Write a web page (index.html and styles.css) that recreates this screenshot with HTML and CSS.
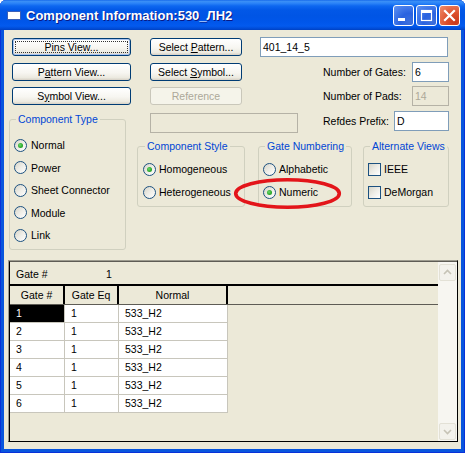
FILE: index.html
```html
<!DOCTYPE html>
<html>
<head>
<meta charset="utf-8">
<title>Component Information</title>
<link rel="stylesheet" href="styles.css">
</head>
<body>
<div class="window">
  <div class="titlebar">
    <svg class="app-icon" width="14" height="9" viewBox="0 0 14 9"><rect x="0.5" y="0.5" width="13" height="8" fill="#fff" stroke="#3a5fb8"/></svg>
    <span class="title">Component Information:530_ЛН2</span>
    <div class="caption">
      <span class="cbtn blue"><svg width="19" height="19" viewBox="0 0 19 19"><rect x="4" y="12" width="7" height="3" fill="#fff"/></svg></span>
      <span class="cbtn blue"><svg width="19" height="19" viewBox="0 0 19 19"><rect x="4.5" y="4.5" width="10" height="10" fill="none" stroke="#fff" stroke-width="1.2"/><rect x="4" y="4" width="11" height="3" fill="#fff"/></svg></span>
      <span class="cbtn red"><svg width="19" height="19" viewBox="0 0 19 19"><path d="M5 5 L14 14 M14 5 L5 14" stroke="#fff" stroke-width="2.2" stroke-linecap="square"/></svg></span>
    </div>
  </div>
  <div class="client">
    <div class="upper">
      <div class="left-col">
        <button class="btn btn-a default">Pins View...</button>
        <button class="btn btn-a">P<u>a</u>ttern View...</button>
        <button class="btn btn-a">S<u>y</u>mbol View...</button>
        <fieldset class="group g-type">
          <legend>Component Type</legend>
          <div class="opts opts-type">
            <label class="opt"><span class="radio on"></span>Normal</label>
            <label class="opt"><span class="radio"></span>Power</label>
            <label class="opt"><span class="radio"></span>Sheet Connector</label>
            <label class="opt"><span class="radio"></span>Module</label>
            <label class="opt"><span class="radio"></span>Link</label>
          </div>
        </fieldset>
      </div>
      <div class="right-col">
        <div class="row">
          <button class="btn btn-b">Select <u>P</u>attern...</button>
          <div class="edit wide">401_14_5</div>
        </div>
        <div class="row">
          <button class="btn btn-b">Select <u>S</u>ymbol...</button>
          <div class="field">
            <span class="lbl">Number of Gates:</span>
            <div class="edit num">6</div>
          </div>
        </div>
        <div class="row">
          <button class="btn btn-b disabled">Reference</button>
          <div class="field">
            <span class="lbl">Number of Pads:</span>
            <div class="edit num off">14</div>
          </div>
        </div>
        <div class="row r4">
          <div class="edit blank off"></div>
          <span class="lbl lbl-ref">Refdes Prefix:</span>
          <div class="edit refdes">D</div>
        </div>
        <div class="groups">
          <fieldset class="group g-style">
            <legend class="lg-style">Component Style</legend>
            <div class="opts opts-small opts-style">
              <label class="opt"><span class="radio on"></span>Homogeneous</label>
              <label class="opt"><span class="radio"></span>Heterogeneous</label>
            </div>
          </fieldset>
          <fieldset class="group g-num">
            <legend>Gate Numbering</legend>
            <div class="opts opts-small">
              <label class="opt"><span class="radio"></span>Alphabetic</label>
              <label class="opt"><span class="radio on"></span>Numeric</label>
            </div>
          </fieldset>
          <fieldset class="group g-alt">
            <legend>Alternate Views</legend>
            <div class="opts opts-small">
              <label class="opt"><span class="check"></span>IEEE</label>
              <label class="opt"><span class="check"></span>DeMorgan</label>
            </div>
          </fieldset>
        </div>
      </div>
    </div>
    <div class="panel">
      <div class="panel-in">
        <div class="gridarea">
          <div class="info"><span class="info-k">Gate #</span><span class="info-v">1</span></div>
          <div class="hdr">
            <div class="hc c1">Gate #</div>
            <div class="hc c2">Gate Eq</div>
            <div class="hc c3">Normal</div>
            <div class="hc c4"></div>
          </div>
          <div class="rows">
            <div class="tr"><div class="td c1 sel">1</div><div class="td c2">1</div><div class="td c3">533_H2</div></div>
            <div class="tr"><div class="td c1">2</div><div class="td c2">1</div><div class="td c3">533_H2</div></div>
            <div class="tr"><div class="td c1">3</div><div class="td c2">1</div><div class="td c3">533_H2</div></div>
            <div class="tr"><div class="td c1">4</div><div class="td c2">1</div><div class="td c3">533_H2</div></div>
            <div class="tr"><div class="td c1">5</div><div class="td c2">1</div><div class="td c3">533_H2</div></div>
            <div class="tr"><div class="td c1">6</div><div class="td c2">1</div><div class="td c3">533_H2</div></div>
          </div>
        </div>
        <div class="vscroll">
          <span class="sb"><svg width="15" height="15" viewBox="0 0 15 15"><path d="M4 9 L7.5 5.5 L11 9" fill="none" stroke="#C6C3B6" stroke-width="1.6"/></svg></span>
          <span class="sb"><svg width="15" height="15" viewBox="0 0 15 15"><path d="M4 6 L7.5 9.5 L11 6" fill="none" stroke="#C6C3B6" stroke-width="1.6"/></svg></span>
        </div>
      </div>
    </div>
  </div>
  <svg class="annotation" width="116" height="46" viewBox="0 0 116 46"><ellipse cx="57.5" cy="21.5" rx="51.8" ry="13.8" fill="none" stroke="#E3151A" stroke-width="3.6"/></svg>
</div>
</body>
</html>
```
FILE: styles.css
```css
body {
  margin: 0;
  background: #ffffff;
  font-family: "Liberation Sans", Arial, sans-serif;
  font-size: 10.5px;
  color: #000;
}

.window {
  position: relative;
  width: 465px;
  height: 453px;
  box-sizing: border-box;
  display: flex;
  flex-direction: column;
  background: #0855DD;
  box-shadow: inset 1px 0 0 #0831D9, inset -1px 0 0 #0831D9, inset 0 -1px 0 #0831D9;
  border-radius: 6px 6px 0 0;
}

.titlebar {
  height: 30px;
  flex: none;
  display: flex;
  align-items: center;
  padding-left: 7px;
  border-radius: 6px 6px 0 0;
  background: linear-gradient(180deg, #0A5DE8 0px, #3D91F5 1px, #2E86F8 3px, #0D67F0 6px, #0258E7 10px, #0055E5 16px, #0056EA 22px, #035AEE 26px, #0049D2 29px, #0040C0 30px);
}

.app-icon {
  flex: none;
  margin-top: 1px;
}

.title {
  margin-left: 5px;
  color: #fff;
  font-weight: bold;
  font-size: 13px;
  text-shadow: 1px 1px 0 #0A1883;
  white-space: nowrap;
}

.caption {
  margin-left: auto;
  margin-right: 5px;
  display: flex;
  gap: 2px;
}

.cbtn {
  width: 21px;
  height: 21px;
  box-sizing: border-box;
  border: 1px solid #fff;
  border-radius: 3px;
  display: flex;
}

.cbtn.blue {
  background: radial-gradient(circle at 80% 85%, #3E6FDB 0%, #2A62E0 40%, #5F93F3 100%);
}

.cbtn.red {
  background: radial-gradient(circle at 80% 85%, #C9391B 0%, #DC4F2C 40%, #F08E6B 100%);
}

.client {
  flex: 1;
  margin: 0 4px 4px;
  background: #ECE9D8;
}

.upper {
  display: flex;
  padding: 7px 0 0 5px;
}

.left-col {
  width: 123px;
  padding-top: 1px;
  display: flex;
  flex-direction: column;
  align-items: flex-start;
}

.right-col {
  margin-left: 5px;
  width: 312px;
}

.btn {
  font-family: inherit;
  font-size: 10.5px;
  height: 18px;
  padding: 0;
  margin: 0;
  box-sizing: border-box;
  border: 1px solid #003C74;
  border-radius: 3px;
  color: #000;
  background: linear-gradient(180deg, #FFFFFF 0%, #F7F6F1 55%, #ECEAE0 85%, #D6D0C5 100%);
  line-height: 16px;
  text-align: center;
  white-space: nowrap;
}

.btn-a {
  margin-left: 3px;
  width: 119px;
  margin-bottom: 6.5px;
}

.btn.default {
  box-shadow: inset 0 0 0 1px #A9C3F0;
  outline: 1px dotted #333;
  outline-offset: -4px;
}

.btn-b {
  margin-left: 13px;
  width: 92px;
  flex: none;
}

.btn.disabled {
  color: #ACA899;
  border-color: #C9C7BA;
  background: #F5F4EA;
}

.row {
  display: flex;
  align-items: center;
  height: 20px;
  margin-bottom: 4.5px;
}

.row.r4 {
  align-items: flex-start;
  height: 23px;
  margin-bottom: 0;
}

.edit {
  height: 20px;
  box-sizing: border-box;
  border: 1px solid #7F9DB9;
  background: #fff;
  padding-left: 2px;
  line-height: 18px;
  flex: none;
}

.edit.off {
  background: #ECE9D8;
  border-color: #B5B2A6;
  color: #ACA899;
}

.edit.wide {
  width: 188px;
  margin-left: 18px;
}

.field {
  margin-left: 18px;
  flex: 1;
  display: flex;
  align-items: center;
}

.lbl {
  padding-left: 63px;
  white-space: nowrap;
}

.edit.num {
  width: 37px;
  margin-left: auto;
}

.edit.blank {
  width: 148px;
  margin-left: 13px;
  margin-top: 2.5px;
}

.lbl-ref {
  padding-left: 0;
  margin-left: 25px;
  line-height: 20px;
}

.edit.refdes {
  width: 55px;
  margin-left: auto;
}

.groups {
  display: flex;
  margin-top: 6px;
}

.group {
  margin: 0;
  padding: 0;
  min-width: 0;
  box-sizing: border-box;
  border: 1px solid #D0D0BF;
  border-radius: 3px;
}

.group legend {
  margin-left: 6px;
  padding: 0 2px;
  color: #0046D5;
  font-size: 10.5px;
  line-height: 13px;
}

.group legend.lg-style {
  margin-left: 7px;
}

.g-type {
  margin-top: 1.5px;
  width: 117px;
  height: 137px;
}

.g-style {
  width: 108px;
  height: 67px;
}

.g-num {
  width: 94px;
  height: 67px;
  margin-left: 13px;
}

.g-alt {
  width: 86px;
  height: 67px;
  margin-left: 11px;
}

.opts {
  display: flex;
  flex-direction: column;
  padding-left: 4px;
}

.opts-type {
  padding-top: 8px;
}

.opts-type .opt {
  height: 22.5px;
  gap: 4px;
}

.opts-small {
  padding-top: 5px;
}

.opts-style {
  padding-left: 5px;
}

.opt {
  display: flex;
  align-items: center;
  height: 23px;
  gap: 3px;
  white-space: nowrap;
}

.radio {
  position: relative;
  flex: none;
  width: 13px;
  height: 13px;
  box-sizing: border-box;
  border: 1px solid #1C5180;
  border-radius: 50%;
  background: linear-gradient(135deg, #D6D4C8 0%, #EEEDE7 50%, #FFFFFF 100%);
}

.radio.on::after {
  content: "";
  position: absolute;
  left: 3px;
  top: 3px;
  width: 5px;
  height: 5px;
  border-radius: 50%;
  background: radial-gradient(circle at 40% 40%, #6EDB6E 0%, #2CAA2C 55%, #1D931D 100%);
}

.check {
  flex: none;
  width: 13px;
  height: 13px;
  box-sizing: border-box;
  border: 1px solid #1C5180;
  background: linear-gradient(135deg, #D6D4C8 0%, #EEEDE7 50%, #FFFFFF 100%);
}

.panel {
  margin: 10px 0 0 4px;
  width: 450px;
  height: 182px;
  box-sizing: border-box;
  border: 1px solid;
  border-color: #9D9B8F #000 #000 #9D9B8F;
}

.panel-in {
  height: 100%;
  box-sizing: border-box;
  border-top: 1px solid #5E5C55;
  border-left: 1px solid #000;
  display: flex;
}

.gridarea {
  width: 428px;
  flex: none;
}

.info {
  height: 22px;
  display: flex;
  align-items: center;
  padding-left: 6px;
  padding-top: 1px;
  box-sizing: border-box;
}

.info-k {
  width: 90px;
}

.hdr {
  display: flex;
  height: 21px;
  box-sizing: border-box;
  border-top: 2px solid #000;
  border-bottom: 1px solid #5E5C55;
}

.hc {
  box-sizing: border-box;
  border-right: 2px solid #000;
  text-align: center;
  line-height: 18px;
}

.c1 { width: 55px; }
.c2 { width: 54px; }
.c3 { width: 109px; }
.hc.c4 { flex: 1; border-right: 0; }

.rows {
  width: 218px;
  background: #fff;
}

.tr {
  display: flex;
  height: 18px;
  box-sizing: border-box;
  border-bottom: 1px solid #C8C6BC;
}

.td {
  box-sizing: border-box;
  border-right: 1px solid #C8C6BC;
  padding-left: 6px;
  line-height: 17px;
}

.td.sel {
  background: #000;
  color: #fff;
}

.vscroll {
  flex: 1;
  background: #F7F6F1;
  display: flex;
  flex-direction: column;
  justify-content: space-between;
  padding: 2px 1px 1px 1px;
}

.sb {
  width: 17px;
  height: 17px;
  box-sizing: border-box;
  border: 1px solid #E3E1D6;
  border-radius: 2px;
  background: #F3F2EC;
  display: flex;
  align-items: center;
  justify-content: center;
}

.annotation {
  position: absolute;
  left: 230px;
  top: 172px;
}
```
